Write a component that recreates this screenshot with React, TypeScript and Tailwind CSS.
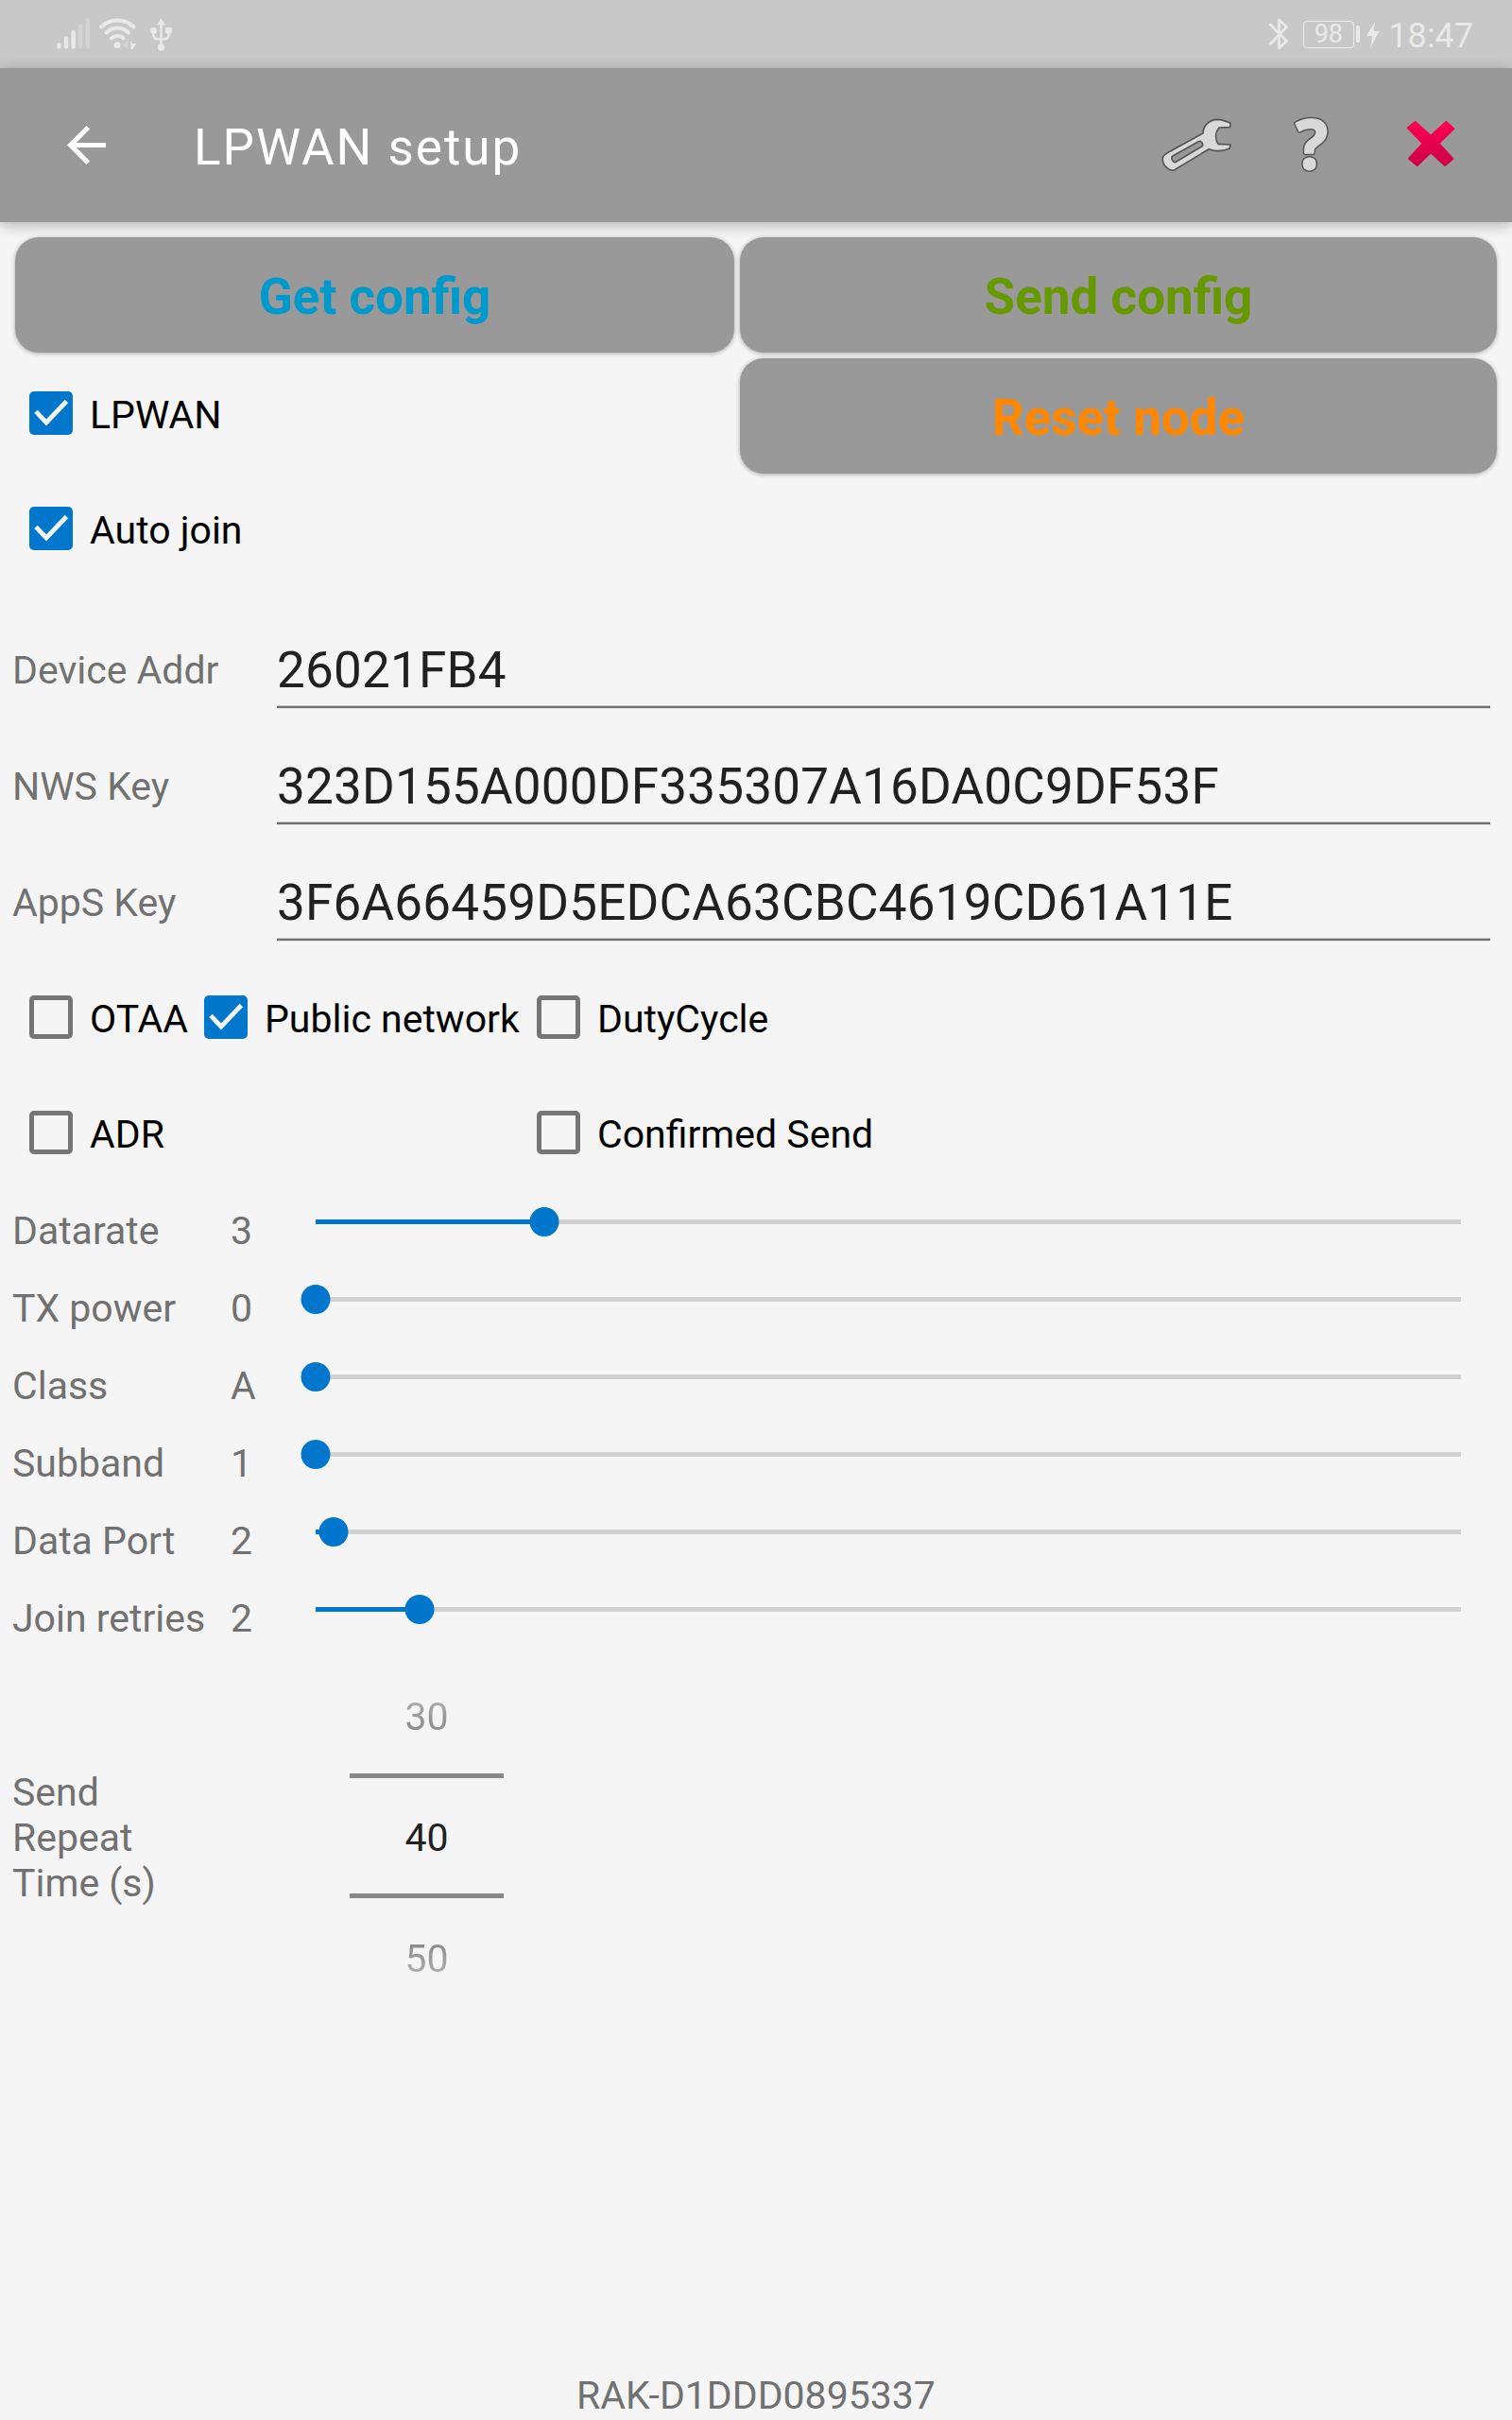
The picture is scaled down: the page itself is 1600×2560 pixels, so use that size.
import React from "react";

function StatusBar() {
  return (
    <div className="flex h-[72px] shrink-0 items-start justify-between bg-[#c8c8c8] pl-[60px] pr-[41px] text-[#e9e9e9]">
      <div className="flex pt-[18px]">
        <svg width="36" height="36" viewBox="0 0 36 36" stroke="currentColor" strokeWidth="4.4" strokeLinecap="round">
          <path d="M2.3 29.4V31.6M10 22.4V31.6M17.6 16V31.6" />
          <path d="M25.2 9V31.6M32.8 3.2V31.6" opacity=".35" />
        </svg>
        <svg className="ml-[8px]" width="42" height="36" viewBox="0 0 42 36" fill="none" stroke="currentColor" strokeWidth="4" strokeLinecap="round">
          <path d="M3 10.5C12.5 1 28 1 37.5 10.5M8.5 16.5C15 10 26 10 32 16.5M14 22.5C17 19 24 19 26.5 22.5" />
          <circle cx="20" cy="29.8" r="3.5" fill="currentColor" stroke="none" />
          <path d="M31.5 25V34L25.5 29.5Z" fill="currentColor" stroke="none" opacity=".35" />
          <path d="M34.5 25L36.5 28H40.5L36.5 34H34.5Z" fill="currentColor" stroke="none" />
        </svg>
        <svg className="ml-[12px]" width="26" height="38" viewBox="0 0 26 38" fill="none" stroke="currentColor" strokeWidth="2.4">
          <path d="M12.5 32V6M4.5 15V19Q4.5 23.4 9 23.4H16Q20.5 23.4 20.5 19V14" />
          <path d="M12.5 1.5L17 8.5H8Z" fill="currentColor" stroke="none" />
          <circle cx="4.6" cy="14.4" r="3.4" fill="currentColor" stroke="none" />
          <circle cx="12.5" cy="32" r="3.7" fill="currentColor" stroke="none" />
          <rect x="17" y="11" width="7" height="6.6" rx="1" fill="currentColor" stroke="none" />
        </svg>
      </div>
      <div className="flex h-[72px] items-center">
        <svg width="24" height="38" viewBox="0 0 24 38" fill="none" stroke="currentColor" strokeWidth="2.8" strokeLinejoin="round" strokeLinecap="round">
          <path d="M3.2 9L20.5 26.5L12.5 34V4L20.5 11.5L3.2 29.5" />
        </svg>
        <div className="ml-[14px] flex h-[29px] w-[54px] items-center justify-center rounded-[4px] border-[1.5px] border-[#e9e9e9] text-[27px] leading-none">
          98
        </div>
        <div className="ml-[2px] h-[18px] w-[4.5px] rounded-[2px] bg-[#e9e9e9]" />
        <svg className="ml-[7px]" width="14" height="27" viewBox="0 0 14 27" fill="currentColor">
          <path d="M9 0L0 15H6L4.5 27L13.5 10H7.5Z" />
        </svg>
        <div className="ml-[9px] pt-[3px] text-[36px] leading-none">18:47</div>
      </div>
    </div>
  );
}

function Header() {
  return (
    <div className="relative z-10 flex h-[163px] shrink-0 items-center bg-[#999999] pl-[71px] text-white shadow-[0_3px_14px_rgba(0,0,0,0.28)]">
      <svg width="41" height="41" viewBox="4 4 16 16" fill="currentColor">
        <path d="M20 11H7.83l5.59-5.59L12 4l-8 8 8 8 1.41-1.41L7.83 13H20v-2z" />
      </svg>
      <div className="ml-[93px] pt-[4px] text-[53px] leading-[62px] tracking-[2px]">LPWAN setup</div>
      <div className="ml-auto flex items-center pr-[57px]">
        <svg width="80" height="65" viewBox="75 362 240 195" fill="#d9d9d9" stroke="#555555" strokeWidth="5" strokeLinejoin="round">
          <path d="M216 422C217 396 238 378 262 378C277 379 290 384 303 389L302 403L267 404C254 420 254 440 264 456L303 458L301 470C280 479 257 481 235 472L128 537C112 548 86 522 88 503C88 495 92 491 100 486Z" />
          <path d="M120 494L202 448C212 444 219 459 212 464L130 513C122 518 112 500 120 494Z" fill="#999999" />
        </svg>
        <svg
          className="ml-[46px]"
          width="72"
          height="120"
          viewBox="0 0 72 120"
          textAnchor="middle"
          fontSize="71"
          fontWeight="700"
          fontFamily="'Noto Sans', sans-serif"
          strokeLinejoin="round"
        >
          <text x="36" y="84.5" fill="#d9d9d9" stroke="#555555" strokeWidth="4.8" paintOrder="stroke">
            <tspan>?</tspan>
          </text>
          <text x="36" y="84.5" fill="#d9d9d9" stroke="#d9d9d9" strokeWidth="1.8" aria-hidden="true">
            ?
          </text>
        </svg>
        <svg className="-mt-[4px] ml-[61px]" width="58" height="58" viewBox="855 371 174 174">
          <defs>
            <linearGradient id="closeFill" x1="0" y1="0" x2="0" y2="1">
              <stop offset="0" stopColor="#ff0055" />
              <stop offset="1" stopColor="#cc0044" />
            </linearGradient>
          </defs>
          <path
            d="M869 408L893 389L942 433L991 389L1015 411L967 457L1012 506L987 527L942 486L899 527L873 505L917 457Z"
            fill="url(#closeFill)"
            stroke="url(#closeFill)"
            strokeWidth="6"
            strokeLinejoin="round"
          />
        </svg>
      </div>
    </div>
  );
}

function ActionButton({ label, color }: { label: string; color: string }) {
  return (
    <button
      className={`flex h-[122px] w-full shrink-0 items-center justify-center rounded-[25px] bg-[#999999] pt-[4px] text-[53px] font-bold leading-[62px] shadow-[0_1px_5px_rgba(0,0,0,0.3)] ${color}`}
    >
      {label}
    </button>
  );
}

function CheckItem({ label, checked = false }: { label: string; checked?: boolean }) {
  return (
    <div className="flex h-[122px] items-center text-black">
      {checked ? (
        <div className="size-[46px] shrink-0 rounded-[5px] bg-[#0077cc]">
          <svg width="46" height="46" viewBox="0 0 46 46" fill="none" stroke="#f5f5f5" strokeWidth="4.8">
            <path d="M7 21.4L18 33L39.4 10.5" />
          </svg>
        </div>
      ) : (
        <div className="size-[46px] shrink-0 rounded-[5px] border-[5px] border-[#757575]" />
      )}
      <span className="ml-[18px] whitespace-nowrap pt-[4px]">{label}</span>
    </div>
  );
}

function Field({ label, value }: { label: string; value: string }) {
  return (
    <div className="flex h-[123px] items-end pl-[13px] pr-[23px]">
      <div className="mb-[17px] w-[280px] shrink-0">{label}</div>
      <div className="flex-1">
        <div className="mb-[6px] text-[53px] leading-[62px] tracking-[0.21px] text-[#212121]">{value}</div>
        <div className="h-[4px] border-b border-t border-b-[#dfdfdf] border-t-[#c9c9c9] bg-[#717171]" />
      </div>
    </div>
  );
}

function SliderRow({ label, value, fraction }: { label: string; value: string; fraction: number }) {
  const position = `${fraction * 100}%`;
  return (
    <div className="flex h-[82px] items-center pl-[13px] pr-[54px]">
      <div className="w-[231px] shrink-0">{label}</div>
      <div className="w-[90px] shrink-0">{value}</div>
      <div className="relative mt-[16px] flex h-[31px] flex-1 items-center self-start">
        <div className="h-[5px] w-full bg-[#d1d1d1]">
          <div className="h-full bg-[#0077cc]" style={{ width: position }} />
        </div>
        <div className="absolute top-0 size-[31px] -translate-x-1/2 rounded-full bg-[#0077cc]" style={{ left: position }} />
      </div>
    </div>
  );
}

const sliders = [
  { label: "Datarate", value: "3", fraction: 3 / 15 },
  { label: "TX power", value: "0", fraction: 0 },
  { label: "Class", value: "A", fraction: 0 },
  { label: "Subband", value: "1", fraction: 0 },
  { label: "Data Port", value: "2", fraction: 1 / 64 },
  { label: "Join retries", value: "2", fraction: 1 / 11 },
];

export default function App() {
  return (
    <div className="flex h-[2560px] w-[1600px] flex-col overflow-hidden bg-[#f5f5f5] font-[Roboto,sans-serif] text-[41px] leading-[48px] text-[#717171]">
      <StatusBar />
      <Header />

      <div className="flex gap-[6px] px-4 pt-4">
        <div className="w-[761px]">
          <ActionButton label="Get config" color="text-[#0099cc]" />
          <div className="mt-[3px] pl-[15px]">
            <CheckItem label="LPWAN" checked />
            <CheckItem label="Auto join" checked />
          </div>
        </div>
        <div className="flex flex-1 flex-col gap-[6px]">
          <ActionButton label="Send config" color="text-[#669900]" />
          <ActionButton label="Reset node" color="text-[#ff8800]" />
        </div>
      </div>

      <div className="mt-[7px]">
        <Field label="Device Addr" value="26021FB4" />
        <Field label="NWS Key" value="323D155A000DF335307A16DA0C9DF53F" />
        <Field label="AppS Key" value="3F6A66459D5EDCA63CBC4619CD61A11E" />
      </div>

      <div className="mt-[19px] grid grid-cols-[185px_352px_1fr] pl-[31px]">
        <CheckItem label="OTAA" />
        <CheckItem label="Public network" checked />
        <CheckItem label="DutyCycle" />
        <CheckItem label="ADR" />
        <div />
        <CheckItem label="Confirmed Send" />
      </div>

      <div className="mt-[2px]">
        {sliders.map((s) => (
          <SliderRow key={s.label} {...s} />
        ))}
      </div>

      <div className="mt-[39px] flex items-center pl-[13px]">
        <div className="w-[357px] shrink-0">
          Send
          <br />
          Repeat
          <br />
          Time (s)
        </div>
        <div className="w-[163px] text-center">
          <div className="bg-gradient-to-b from-[#b4b4b4] to-[#828282] bg-clip-text text-transparent">30</div>
          <div className="mt-[36px] h-[5px] bg-[#888888]" />
          <div className="mt-[39px] text-[#212121]">40</div>
          <div className="mt-[35px] h-[5px] bg-[#888888]" />
          <div className="mt-[40px] bg-gradient-to-b from-[#828282] to-[#b8b8b8] bg-clip-text text-transparent">50</div>
        </div>
      </div>

      <div className="mt-auto pb-[2px] text-center">RAK-D1DDD0895337</div>
    </div>
  );
}
